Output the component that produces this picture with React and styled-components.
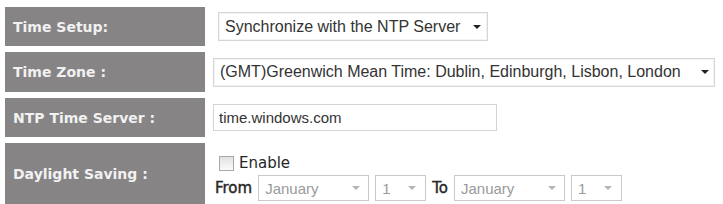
import React from 'react';
import styled, { createGlobalStyle } from 'styled-components';

const GlobalStyle = createGlobalStyle`
  html, body {
    margin: 0;
    padding: 0;
    background: #fff;
  }
`;

const Table = styled.div`
  display: grid;
  grid-template-columns: 200px 1fr;
  grid-template-rows: 39px 40px 39px 62px;
  row-gap: 6px;
  column-gap: 8px;
  padding: 7px 0 0 5px;
  width: 718px;
  box-sizing: border-box;
`;

const Label = styled.div`
  display: flex;
  align-items: center;
  background: #868485;
  color: #f1f1f1;
  font: bold 14px "DejaVu Sans", Verdana, sans-serif;
  padding-left: 8px;
`;

const Cell = styled.div`
  display: flex;
  flex-direction: ${p => (p.$stack ? 'column' : 'row')};
  align-items: ${p => (p.$stack ? 'flex-start' : 'center')};
  justify-content: ${p => (p.$stack ? 'flex-end' : 'flex-start')};
  gap: ${p => (p.$stack ? '3px' : '0')};
  padding-left: ${p => p.$indent || 0}px;
`;

const SelectBox = styled.div`
  display: flex;
  align-items: center;
  justify-content: space-between;
  box-sizing: border-box;
  width: ${p => p.$w}px;
  height: ${p => p.$h || 29}px;
  padding: 0 ${p => p.$pr || 8}px 0 ${p => p.$pl || 6}px;
  border: 1px solid ${p => (p.$disabled ? '#c9c9c9' : '#d6d6d6')};
  background: #fff;
  box-shadow: ${p => (p.$disabled ? 'none' : 'inset 0 0 0 1px #f3f3f3')};
  color: ${p => (p.$disabled ? '#9a9a9a' : '#333')};
  font: ${p => (p.$disabled ? 15 : 16)}px "Liberation Sans", Arial, sans-serif;
  white-space: nowrap;
`;

const Caret = styled.span`
  width: 0;
  height: 0;
  border-left: 4px solid transparent;
  border-right: 4px solid transparent;
  border-top: 4px solid ${p => (p.$disabled ? '#b5b5b5' : '#222')};
`;

const TextInput = styled.div`
  display: flex;
  align-items: center;
  box-sizing: border-box;
  width: 284px;
  height: 27px;
  padding-left: 5px;
  border: 1px solid #d4d4d4;
  color: #333;
  font: 15px "Liberation Sans", Arial, sans-serif;
`;

const Line = styled.div`
  display: flex;
  align-items: center;
  gap: ${p => p.$gap || 4}px;
`;

const Check = styled.span`
  width: 13px;
  height: 13px;
  border: 1px solid #a8a8a8;
  background: linear-gradient(#e2e2e2, #fafafa);
  margin-right: 3px;
`;

const Word = styled.span`
  font: ${p => p.$size || 15}px "DejaVu Sans", Verdana, sans-serif;
  color: #262626;
  -webkit-text-stroke: ${p => (p.$heavy ? '0.4px #262626' : '0')};
`;

function Select({ value, w, disabled, h, pr }) {
  return (
    <SelectBox $w={w} $disabled={disabled} $h={h} $pr={pr}>
      <span>{value}</span>
      <Caret $disabled={disabled} />
    </SelectBox>
  );
}

export default function App() {
  return (
    <>
      <GlobalStyle />
      <Table>
        <Label>Time Setup:</Label>
        <Cell $indent={5}>
          <Select value="Synchronize with the NTP Server" w={270} pr={6} />
        </Cell>

        <Label>Time Zone :</Label>
        <Cell>
          <Select value="(GMT)Greenwich Mean Time: Dublin, Edinburgh, Lisbon, London" w={502} pr={5} />
        </Cell>

        <Label>NTP Time Server :</Label>
        <Cell>
          <TextInput>time.windows.com</TextInput>
        </Cell>

        <Label>Daylight Saving :</Label>
        <Cell $stack $indent={2}>
          <Line $gap={2} style={{ paddingLeft: 4 }}>
            <Check />
            <Word>Enable</Word>
          </Line>
          <Line $gap={6} style={{ marginBottom: 4 }}>
            <Word $heavy>From</Word>
            <Select value="January" w={111} h={26} pr={8} disabled />
            <Select value="1" w={51} h={26} pr={9} disabled />
            <Word $heavy>To</Word>
            <Select value="January" w={111} h={26} pr={8} disabled />
            <Select value="1" w={51} h={26} pr={9} disabled />
          </Line>
        </Cell>
      </Table>
    </>
  );
}
